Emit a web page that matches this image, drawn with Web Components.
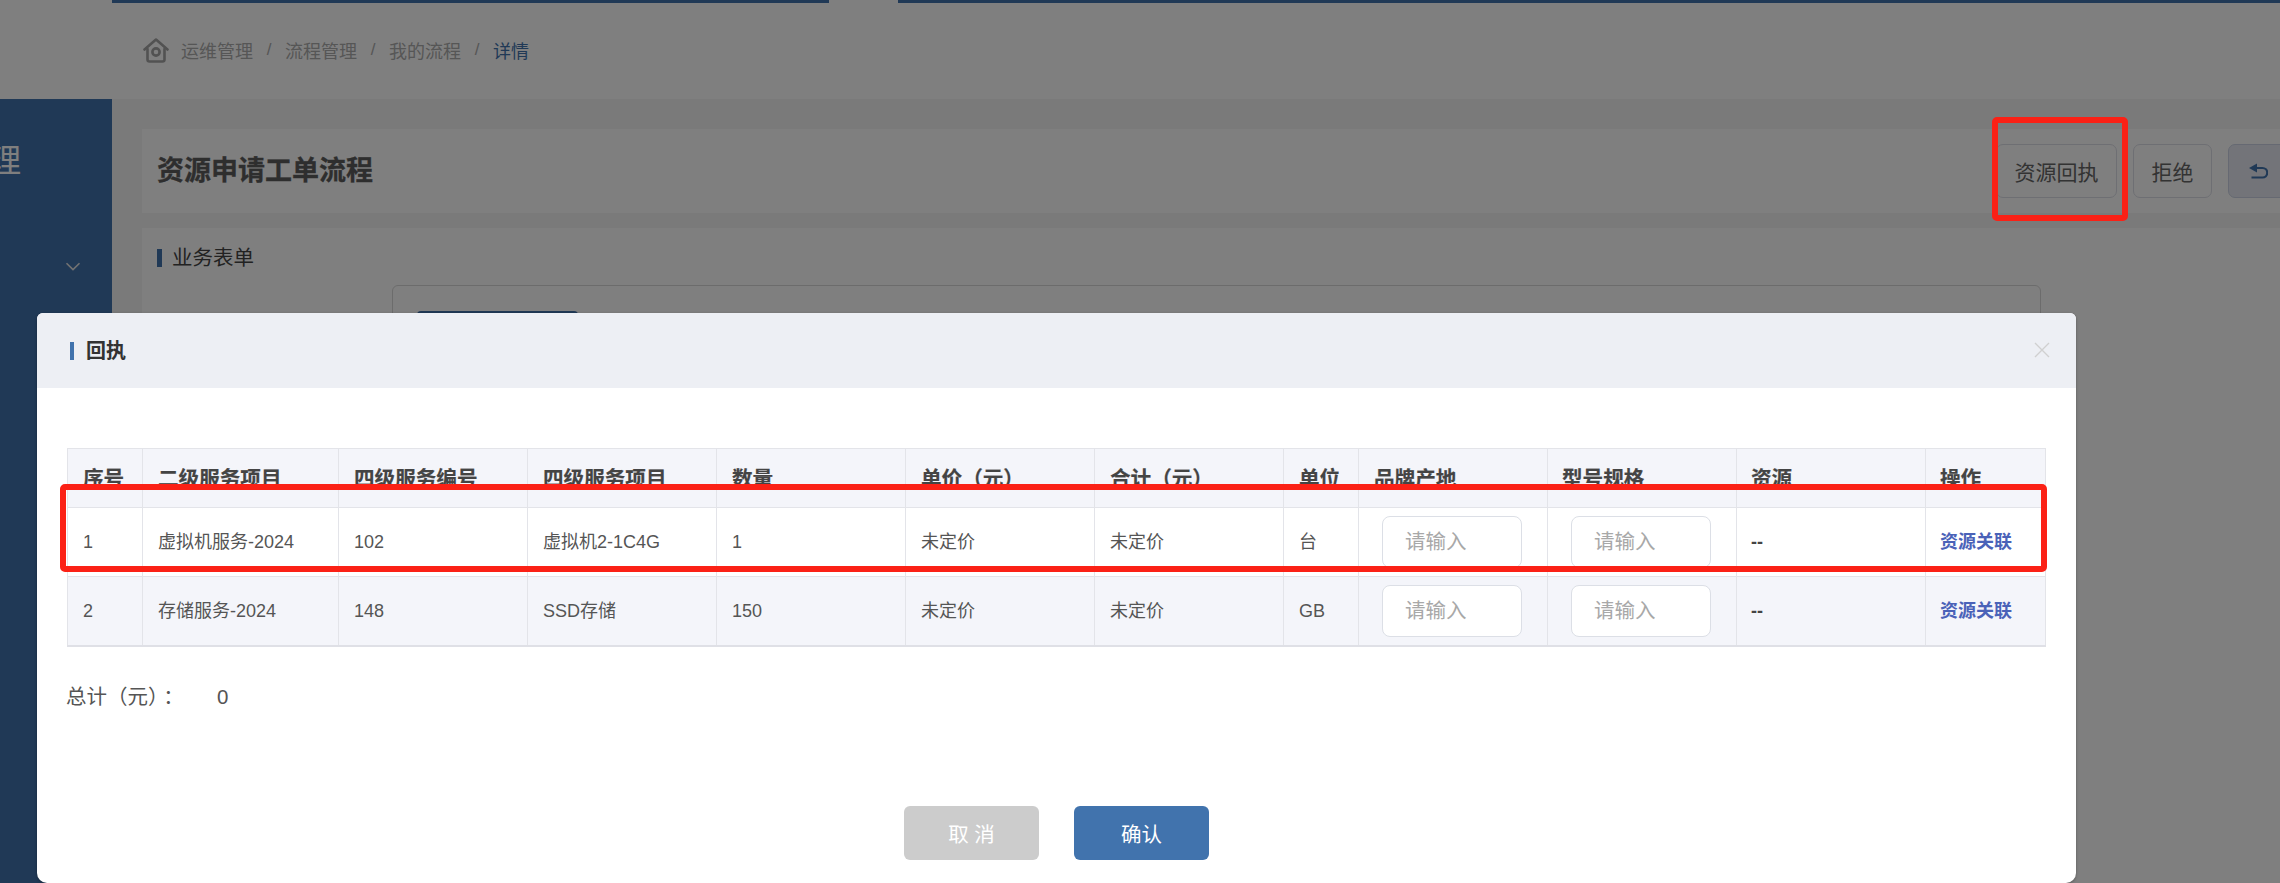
<!DOCTYPE html>
<html lang="zh-CN">
<head>
<meta charset="utf-8">
<title>资源申请工单流程</title>
<style>
html,body{margin:0;padding:0;width:2280px;height:883px;overflow:hidden;background:#fff;
font-family:"Liberation Sans","Noto Sans CJK SC",sans-serif;}
</style>
</head>
<body>
<app-root></app-root>

<script>
function el(name, html, css){
  const tpl=document.createElement('template');
  tpl.innerHTML='<style>'+css+'</style>'+html;
  customElements.define(name,class extends HTMLElement{
    constructor(){super();this.attachShadow({mode:'open'}).appendChild(tpl.content.cloneNode(true));}
  });
}

el('top-line','<i></i><b class="a"></b><i class="g"></i><b class="c"></b>',`
:host{display:flex;height:3px;flex:none}
i{flex:0 0 112px}
.g{flex:0 0 69px}
b{background:#4173ad}
.a{flex:0 0 717px}
.c{flex:1}
`);

el('bread-crumb',`
<svg width="26" height="25" viewBox="0 0 26 25" fill="none" stroke="#a4a4a4" stroke-width="2.6" stroke-linejoin="round" stroke-linecap="round">
<path d="M1.5 11.5 13 1.5l11.5 10"/>
<path d="M4.5 11v10.5a2 2 0 0 0 2 2h13a2 2 0 0 0 2-2V11"/>
<circle cx="13" cy="14" r="3.6"/>
</svg>
<span class="t">运维管理</span><span class="s">/</span>
<span class="t">流程管理</span><span class="s">/</span>
<span class="t">我的流程</span><span class="s">/</span>
<span class="t cur">详情</span>`,`
:host{display:flex;align-items:center;flex:none;height:94px;padding:0 0 2px 143px;font-size:18px;color:#acacac;background:#fff}
svg{margin-right:12px;flex:none}
.s{width:32px;text-align:center;font-size:17px}
.cur{color:#4173ad}
`);

el('side-bar',`<span class="t">理</span><svg width="16" height="9" viewBox="0 0 16 9" fill="none" stroke="#e4e4e4" stroke-width="1.6"><path d="M1.5 1.2 8 7.6l6.5-6.4"/></svg>`,`
:host{display:block;flex:0 0 112px;background:#4173ad;color:#fff;overflow:hidden;height:784px}
.t{display:block;font-size:32px;line-height:40px;margin:42px 0 0 -11px;width:32px}
svg{display:block;margin:81px 0 0 65px}
`);

el('out-button',`<slot></slot>`,`
:host{display:flex;align-items:center;justify-content:center;box-sizing:border-box;flex:none;height:54px;
padding:0 17.5px;border:1px solid #dcdee6;border-radius:7px;font-size:21px;color:#666;background:#fff}
:host([tint]){background:#e6e9f2;border-color:#ccd3e4;color:#4173ad;padding:0 60px 0 20px}
`);

el('page-title',`<h1><slot name="title"></slot></h1><div><slot></slot></div>`,`
:host{display:flex;align-items:center;box-sizing:border-box;height:84px;background:#fff;padding-left:15px;overflow:hidden;flex:none}
h1{flex:0 0 1839px;margin:0;font-size:27px;font-weight:700;color:#5c5c5c;line-height:36px;-webkit-text-stroke:.3px #5c5c5c}
div{display:flex;gap:16px;flex:none}
`);

el('form-card',`<h2><slot name="title"></slot></h2><div class="box"><b></b></div>`,`
:host{display:block;background:#fff;flex:1;padding:21px 0 0 15px;overflow:hidden}
h2{margin:0;font-size:20.5px;font-weight:400;line-height:18px;color:#444;height:18px;border-left:5px solid #4173ad;padding-left:10px;display:flex;align-items:center}
.box{margin:18px 0 0 235px;width:1649px;height:300px;border:1px solid #d8d8d8;border-radius:6px;box-sizing:border-box;padding:25px 0 0 24px}
b{display:block;width:161px;height:4px;background:#4173ad;border-radius:4px 4px 0 0}
`);

el('input-box',`<slot></slot>`,`
:host{display:flex;align-items:center;box-sizing:border-box;width:140px;height:52px;padding:0 0 0 22px;background:#fff;
border:1px solid #dcdfe6;border-radius:8px;color:#a8a8a8;font-size:20.5px;font-weight:400}
`);

el('order-table',`
<table>
<colgroup><col style="width:75px"><col style="width:196px"><col style="width:189px"><col style="width:189px"><col style="width:189px"><col style="width:189px"><col style="width:189px"><col style="width:75px"><col style="width:189px"><col style="width:189px"><col style="width:189px"><col style="width:120px"></colgroup>
<thead><tr><th>序号</th><th>二级服务项目</th><th>四级服务编号</th><th>四级服务项目</th><th>数量</th><th>单价（元）</th><th>合计（元）</th><th>单位</th><th>品牌产地</th><th>型号规格</th><th>资源</th><th>操作</th></tr></thead>
<tbody>
<tr><td>1</td><td>虚拟机服务-2024</td><td>102</td><td>虚拟机2-1C4G</td><td>1</td><td>未定价</td><td>未定价</td><td>台</td><td class="f"><input-box>请输入</input-box></td><td class="f"><input-box>请输入</input-box></td><td class="d">--</td><td><a>资源关联</a></td></tr>
<tr class="alt"><td>2</td><td>存储服务-2024</td><td>148</td><td>SSD存储</td><td>150</td><td>未定价</td><td>未定价</td><td>GB</td><td class="f"><input-box>请输入</input-box></td><td class="f"><input-box>请输入</input-box></td><td class="d">--</td><td><a>资源关联</a></td></tr>
</tbody>
</table>`,`
:host{display:block;flex:none}
table{border-collapse:collapse;table-layout:fixed;width:1978px;font-size:18px;line-height:24px;color:#555;border-bottom:2px solid #dfe0e6}
th,td{border:1px solid #e3e4e9;padding:0 15px;text-align:left;box-sizing:border-box;white-space:nowrap;overflow:hidden}
th{height:59px;padding-top:2px;background:#f4f5fa;font-size:20.6px;font-weight:700;color:#444;-webkit-text-stroke:.2px #444}
th:nth-child(n+10),td:nth-child(n+11){padding-left:14px}
td{height:69px}
tr.alt td{background:#f4f5fa}
td.f{padding:0 0 0 23px}
td.d{font-weight:700;color:#444}
a{font-weight:700;color:#4a62b8}
`);

el('act-button',`<slot></slot>`,`
:host{display:flex;align-items:center;justify-content:center;width:135px;height:54px;border-radius:6px;background:#4173ad;color:#fff;font-size:20.5px}
:host([muted]){background:#ccc}
`);

el('receipt-dialog',`
<header><span class="t">回执</span>
<svg width="16" height="16" viewBox="0 0 16 16" stroke="#d0d0d0" stroke-width="1.4"><path d="M1 1l14 14M15 1 1 15"/></svg></header>
<main>
<slot></slot>
<p><span class="l">总计（元）<span class="c">：</span></span><span>0</span></p>
<footer><act-button muted>取 消</act-button><act-button>确认</act-button></footer>
</main>`,`
:host{position:absolute;left:37px;top:313px;width:2039px;height:570px;background:#fff;border-radius:6px 6px 10px 10px;overflow:hidden;display:block;box-shadow:0 1px 3px rgba(0,0,0,.3)}
header{height:75px;background:#edeff4;display:flex;align-items:center;padding:0 26px 2px 33px;box-sizing:border-box}
.t{flex:1;border-left:4px solid #4173ad;padding-left:12px;height:18px;line-height:18px;font-size:20px;font-weight:700;color:#333;margin-top:2px}
main{padding:60px 31px 0 30px;display:flex;flex-direction:column}
p{margin:35px 0 0 -1px;display:flex;line-height:30px;font-size:20.5px;color:#555;height:30px}
.l{flex:0 0 151px}
.c{margin-left:5px}
footer{display:flex;justify-content:center;gap:35px;margin:94px 0 0 1px}
`);

el('red-box','',`
:host{position:absolute;display:block;box-sizing:border-box;border:6px solid #fb2116;border-radius:5px}
`);

el('app-root',`
<top-line></top-line>
<bread-crumb></bread-crumb>
<div class="body">
  <side-bar></side-bar>
  <div class="main">
    <page-title><span slot="title">资源申请工单流程</span>
      <out-button>资源回执</out-button><out-button>拒绝</out-button>
      <out-button tint><svg width="19" height="16" viewBox="0 0 19 16" fill="none"><path d="M6 5h7.5a4.7 4.7 0 0 1 0 9.5H2.5" stroke="#4173ad" stroke-width="2.2"/><path d="M0 5 8 .5v9z" fill="#4173ad"/></svg></out-button>
    </page-title>
    <form-card><span slot="title">业务表单</span></form-card>
  </div>
</div>
<div class="mask"></div>
<receipt-dialog><order-table></order-table></receipt-dialog>
<red-box style="left:1992px;top:117px;width:136px;height:104px"></red-box>
<red-box style="left:60px;top:484px;width:1987px;height:88px"></red-box>
`,`
:host{display:flex;flex-direction:column;position:relative;width:2280px;height:883px;overflow:hidden;background:#fff}
.body{display:flex;flex:1;min-height:0}
.main{flex:1;min-width:0;background:#f4f4f4;padding:30px 0 0 30px;display:flex;flex-direction:column;gap:15px}
.mask{position:absolute;inset:0;background:rgba(0,0,0,.5)}
`);
</script>
</body>
</html>
